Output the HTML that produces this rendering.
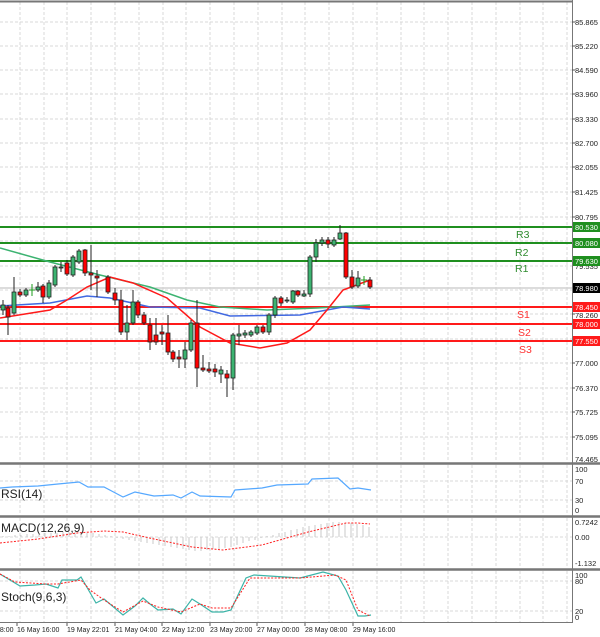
<!DOCTYPE html>
<html><head><meta charset="utf-8"><style>
html,body{margin:0;padding:0;background:#fff;width:600px;height:637px;overflow:hidden}
svg{display:block;font-family:"Liberation Sans",sans-serif}
.ax{font-size:7.5px;fill:#222}
.lbl{font-size:12px;fill:#222}
</style></head><body>
<svg width="600" height="637" viewBox="0 0 600 637" xmlns="http://www.w3.org/2000/svg">
<rect width="600" height="637" fill="#fff"/>
<!-- grid -->
<g stroke="#d8d8d8" stroke-width="1" stroke-dasharray="3,2">
<path d="M20 2V462M44 2V462M67 2V462M91 2V462M115 2V462M139 2V462M163 2V462M186 2V462M210 2V462M234 2V462M258 2V462M282 2V462M305 2V462M329 2V462M353 2V462M377 2V462M401 2V462M424 2V462M448 2V462M472 2V462M496 2V462M520 2V462M543 2V462M567 2V462"/>
<path d="M20 465V515M44 465V515M67 465V515M91 465V515M115 465V515M139 465V515M163 465V515M186 465V515M210 465V515M234 465V515M258 465V515M282 465V515M305 465V515M329 465V515M353 465V515M377 465V515M401 465V515M424 465V515M448 465V515M472 465V515M496 465V515M520 465V515M543 465V515M567 465V515"/>
<path d="M20 518V568M44 518V568M67 518V568M91 518V568M115 518V568M139 518V568M163 518V568M186 518V568M210 518V568M234 518V568M258 518V568M282 518V568M305 518V568M329 518V568M353 518V568M377 518V568M401 518V568M424 518V568M448 518V568M472 518V568M496 518V568M520 518V568M543 518V568M567 518V568"/>
<path d="M20 571V622M44 571V622M67 571V622M91 571V622M115 571V622M139 571V622M163 571V622M186 571V622M210 571V622M234 571V622M258 571V622M282 571V622M305 571V622M329 571V622M353 571V622M377 571V622M401 571V622M424 571V622M448 571V622M472 571V622M496 571V622M520 571V622M543 571V622M567 571V622"/>
<path d="M0 22H572M0 46H572M0 70H572M0 94H572M0 119H572M0 143H572M0 167H572M0 192H572M0 217H572M0 241H572M0 266H572M0 290H572M0 314H572M0 339H572M0 363H572M0 388H572M0 412H572M0 437H572"/>
<path d="M0 481H572M0 500H572M0 537H572M0 581H572M0 611H572"/>
</g>
<!-- frames -->
<g stroke="#777" fill="none">
<path d="M0 1.5H572" stroke-width="2"/>
<path d="M0 463.5H600M0 516.5H600M0 569.5H600" stroke-width="2.5"/>
<path d="M572.5 0V623" stroke-width="1"/>
<path d="M0 622.5H573" stroke-width="1"/>
</g>
<!-- horizontal level lines -->
<path d="M0 288H572" stroke="#d0d0d0" stroke-width="1.5"/>
<g stroke="#1f8f1f" stroke-width="2"><path d="M0 227H572M0 243H572M0 261H572"/></g>
<g stroke="#ff1a1a" stroke-width="2"><path d="M0 307H572M0 324H572M0 341H572"/></g>
<g font-size="10.5" font-family="Liberation Sans,sans-serif">
<text x="516" y="238" fill="#2e8b2e">R3</text>
<text x="515" y="256" fill="#2e8b2e">R2</text>
<text x="515" y="272" fill="#2e8b2e">R1</text>
<text x="517" y="318" fill="#ff3030">S1</text>
<text x="518" y="336" fill="#ff3030">S2</text>
<text x="519" y="353" fill="#ff3030">S3</text>
</g>
<!-- moving averages -->
<g fill="none" stroke-width="1.5">
<path stroke="#3cb371" d="M0 248 L50 262 L100 275 L150 287 L187 300 L220 307 L267 310 L317 308 L370 305"/>
<path stroke="#4169e1" d="M0 306 L50 303 L87 296 L110 298 L150 307 L200 308 L230 316 L300 315 L343 307 L370 309"/>
<path stroke="#ff1a1a" d="M0 318 L50 310 L67 300 L87 287 L110 277 L133 283 L167 298 L200 327 L230 343 L260 348 L287 343 L310 330 L327 310 L343 290 L370 280"/>
</g>
<!-- candles -->
<g stroke="#222" stroke-width="1">
<path d="M3 300V315M8 305V335M14 277V315M20 289V297M26 288V297M38 282V292M43 284V303M49 280V299M55 265V287M61 262V272M67 260V276M73 255V277M79 249V264M85 249V276M91 245V290M97 270V297M108 275V294M115 288V305M121 290V335M127 305V340M133 290V325M138 300V318M144 312V325M150 318V350M156 318V345M162 325V345M168 315V355M173 350V362M179 350V368M185 342V368M191 320V352M197 300V387M203 355V372M209 362V373M215 364V377M221 366V383M227 370V397M233 333V390M239 325V345M245 330V338M251 330V337M257 325V335M263 325V334M269 313V335M275 296V318M281 296V306M287 297V303M293 290V304M298 290V297M304 290V297M310 255V297M316 239V262M322 237V246M328 237V248M334 237V247M340 225V240M346 232V279M352 270V289M358 271V288M370 277V289"/>
</g>
<g stroke="#1a9a1a"><path d="M32 284V296M29 290H35M364 276V285M361 280H367"/></g>
<g stroke="#222" stroke-width="0.8" fill="#3cb371">
<rect x="1" y="305" width="4" height="5"/><rect x="12" y="292" width="4" height="21"/><rect x="24" y="290" width="4" height="5"/>
<rect x="36" y="287" width="4" height="3"/><rect x="47" y="283" width="4" height="14"/><rect x="53" y="267" width="4" height="18"/>
<rect x="59" y="267" width="4" height="1"/><rect x="71" y="257" width="4" height="18"/><rect x="77" y="251" width="4" height="11"/>
<rect x="125" y="323" width="4" height="9"/><rect x="131" y="302" width="4" height="21"/><rect x="183" y="350" width="4" height="9"/>
<rect x="189" y="323" width="4" height="27"/><rect x="219" y="370" width="4" height="4"/><rect x="231" y="335" width="4" height="43"/>
<rect x="237" y="334" width="4" height="2"/><rect x="243" y="333" width="4" height="2"/><rect x="249" y="332" width="4" height="3"/>
<rect x="255" y="327" width="4" height="6"/><rect x="267" y="315" width="4" height="17"/><rect x="273" y="298" width="4" height="17"/>
<rect x="285" y="300" width="4" height="1"/><rect x="291" y="291" width="4" height="11"/><rect x="302" y="294" width="4" height="2"/>
<rect x="308" y="257" width="4" height="37"/><rect x="314" y="243" width="4" height="14"/><rect x="320" y="240" width="4" height="3"/>
<rect x="332" y="240" width="4" height="5"/><rect x="338" y="233" width="4" height="6"/><rect x="356" y="278" width="4" height="8"/>
</g>
<g stroke="#222" stroke-width="0.8" fill="#ff0000">
<rect x="6" y="308" width="4" height="9"/><rect x="18" y="292" width="4" height="3"/><rect x="41" y="286" width="4" height="11"/>
<rect x="65" y="263" width="4" height="11"/><rect x="83" y="250" width="4" height="23"/><rect x="89" y="273" width="4" height="2"/>
<rect x="95" y="276" width="4" height="2"/><rect x="106" y="277" width="4" height="15"/><rect x="113" y="293" width="4" height="7"/>
<rect x="119" y="300" width="4" height="32"/><rect x="136" y="302" width="4" height="13"/><rect x="142" y="315" width="4" height="8"/>
<rect x="148" y="325" width="4" height="17"/><rect x="154" y="335" width="4" height="7"/><rect x="160" y="332" width="4" height="2"/>
<rect x="166" y="333" width="4" height="19"/><rect x="171" y="352" width="4" height="7"/><rect x="177" y="357" width="4" height="2"/>
<rect x="195" y="323" width="4" height="45"/><rect x="201" y="368" width="4" height="2"/><rect x="207" y="369" width="4" height="2"/>
<rect x="213" y="369" width="4" height="3"/><rect x="225" y="374" width="4" height="4"/><rect x="261" y="327" width="4" height="5"/>
<rect x="279" y="298" width="4" height="5"/><rect x="296" y="291" width="4" height="4"/><rect x="326" y="240" width="4" height="4"/>
<rect x="344" y="233" width="4" height="44"/><rect x="350" y="277" width="4" height="10"/><rect x="368" y="280" width="4" height="7"/>
</g>
<!-- right axis -->
<g class="ax">
<text x="575" y="25">85.865</text><text x="575" y="49">85.220</text><text x="575" y="73">84.590</text>
<text x="575" y="97">83.960</text><text x="575" y="122">83.330</text><text x="575" y="146">82.700</text>
<text x="575" y="170">82.055</text><text x="575" y="195">81.425</text><text x="575" y="220">80.795</text>
<text x="575" y="269">79.535</text><text x="575" y="318">78.260</text><text x="575" y="366">77.000</text>
<text x="575" y="391">76.370</text><text x="575" y="415">75.725</text><text x="575" y="440">75.095</text>
<text x="575" y="462">74.465</text>
</g>
<g stroke="#555"><path d="M572 22h3M572 46h3M572 70h3M572 94h3M572 119h3M572 143h3M572 167h3M572 192h3M572 217h3M572 314h3M572 363h3M572 388h3M572 412h3M572 437h3"/></g>
<rect x="573" y="222" width="27" height="10" fill="#1f8f1f"/><text x="575" y="230" class="ax" fill="#fff" style="fill:#fff">80.530</text>
<rect x="573" y="238" width="27" height="10" fill="#1f8f1f"/><text x="575" y="246" class="ax" style="fill:#fff">80.080</text>
<rect x="573" y="256" width="27" height="10" fill="#1f8f1f"/><text x="575" y="264" class="ax" style="fill:#fff">79.630</text>
<rect x="573" y="283" width="27" height="10" fill="#000"/><text x="575" y="291" class="ax" style="fill:#fff">78.980</text>
<rect x="573" y="302" width="27" height="10" fill="#ff1a1a"/><text x="575" y="310" class="ax" style="fill:#fff">78.450</text>
<rect x="573" y="319" width="27" height="10" fill="#ff1a1a"/><text x="575" y="327" class="ax" style="fill:#fff">78.000</text>
<rect x="573" y="336" width="27" height="10" fill="#ff1a1a"/><text x="575" y="344" class="ax" style="fill:#fff">77.550</text>
<!-- RSI -->
<text x="1" y="498" class="lbl">RSI(14)</text>
<path fill="none" stroke="#55a8ff" stroke-width="1.2" d="M0 488L12 487L38 486L58 484L79 482L88 487L104 487L123 497L135 492L154 496L173 495L181 498L192 492L200 496L231 497L235 490L262 488L277 485L308 484L312 479L338 478L350 489L358 488L371 490"/>
<g class="ax"><text x="575" y="472">100</text><text x="575" y="484">70</text><text x="575" y="503">30</text><text x="575" y="513">0</text></g>
<!-- MACD -->
<g stroke="#c8c8c8" stroke-width="1">
<path d="M3 537v-1M9 537v-1M15 537v-2M21 537v-2M27 537v-3M33 537v-3M39 537v-3M45 537v-4M51 537v-4M57 537v-4M63 537v-5M69 537v-5M75 537v-5M81 537v-5M87 537v-4M93 537v-4M99 537v-3M105 537v-2M111 537v-1M117 537v1M123 537v2M129 537v3M135 537v4M141 537v5M147 537v6M153 537v7M159 537v8M165 537v9M171 537v10M177 537v11M183 537v12M189 537v13M195 537v14M201 537v14M207 537v13M213 537v12M219 537v12M225 537v11M231 537v10M237 537v8M243 537v6M249 537v4M255 537v3M261 537v1M267 537v-1M273 537v-2M279 537v-4M285 537v-5M291 537v-7M297 537v-8M303 537v-10M309 537v-11M315 537v-12M321 537v-13M327 537v-14M333 537v-15M339 537v-15M345 537v-14M351 537v-14M357 537v-13M363 537v-12M369 537v-10"/>
</g>
<path fill="none" stroke="#ff2020" stroke-width="1" stroke-dasharray="2,1.5" d="M0 543L38 539L77 533L104 531L123 532L154 539L192 547L223 550L262 545L308 532L346 523L358 523L370 524"/>
<text x="1" y="532" class="lbl">MACD(12,26,9)</text>
<g class="ax"><text x="575" y="525">0.7242</text><text x="575" y="540">0.00</text><text x="575" y="566">-1.132</text></g>
<!-- Stoch -->
<path fill="none" stroke="#3cb4a8" stroke-width="1.2" d="M0 574L20 586L35 585L46 584L58 588L62 580L77 580L81 577L96 603L104 599L123 615L135 606L143 598L150 604L158 610L173 609L181 614L192 599L200 604L212 612L223 612L231 610L246 578L254 575L300 578L323 572L338 576L346 590L358 616L365 616L371 615"/>
<path fill="none" stroke="#ff2020" stroke-width="1" stroke-dasharray="2,1.5" d="M0 574L15 582L46 584L58 584L81 580L90 590L104 600L123 612L143 601L158 607L181 612L200 604L212 608L231 608L250 578L300 578L335 575L346 580L358 610L370 616"/>
<text x="1" y="601" class="lbl">Stoch(9,6,3)</text>
<g class="ax"><text x="575" y="578">100</text><text x="575" y="584">80</text><text x="575" y="614">20</text><text x="575" y="620">0</text></g>
<!-- dates -->
<g class="ax" style="font-size:7px">
<text x="-4" y="632">08:00</text><text x="17" y="632">16 May 16:00</text><text x="67" y="632">19 May 22:01</text>
<text x="115" y="632">21 May 04:00</text><text x="162" y="632">22 May 12:00</text><text x="210" y="632">23 May 20:00</text>
<text x="257" y="632">27 May 00:00</text><text x="305" y="632">28 May 08:00</text><text x="353" y="632">29 May 16:00</text>
</g>
<g stroke="#555"><path d="M17 623v3M67 623v3M115 623v3M162 623v3M210 623v3M257 623v3M305 623v3M353 623v3"/></g>
</svg>
</body></html>
